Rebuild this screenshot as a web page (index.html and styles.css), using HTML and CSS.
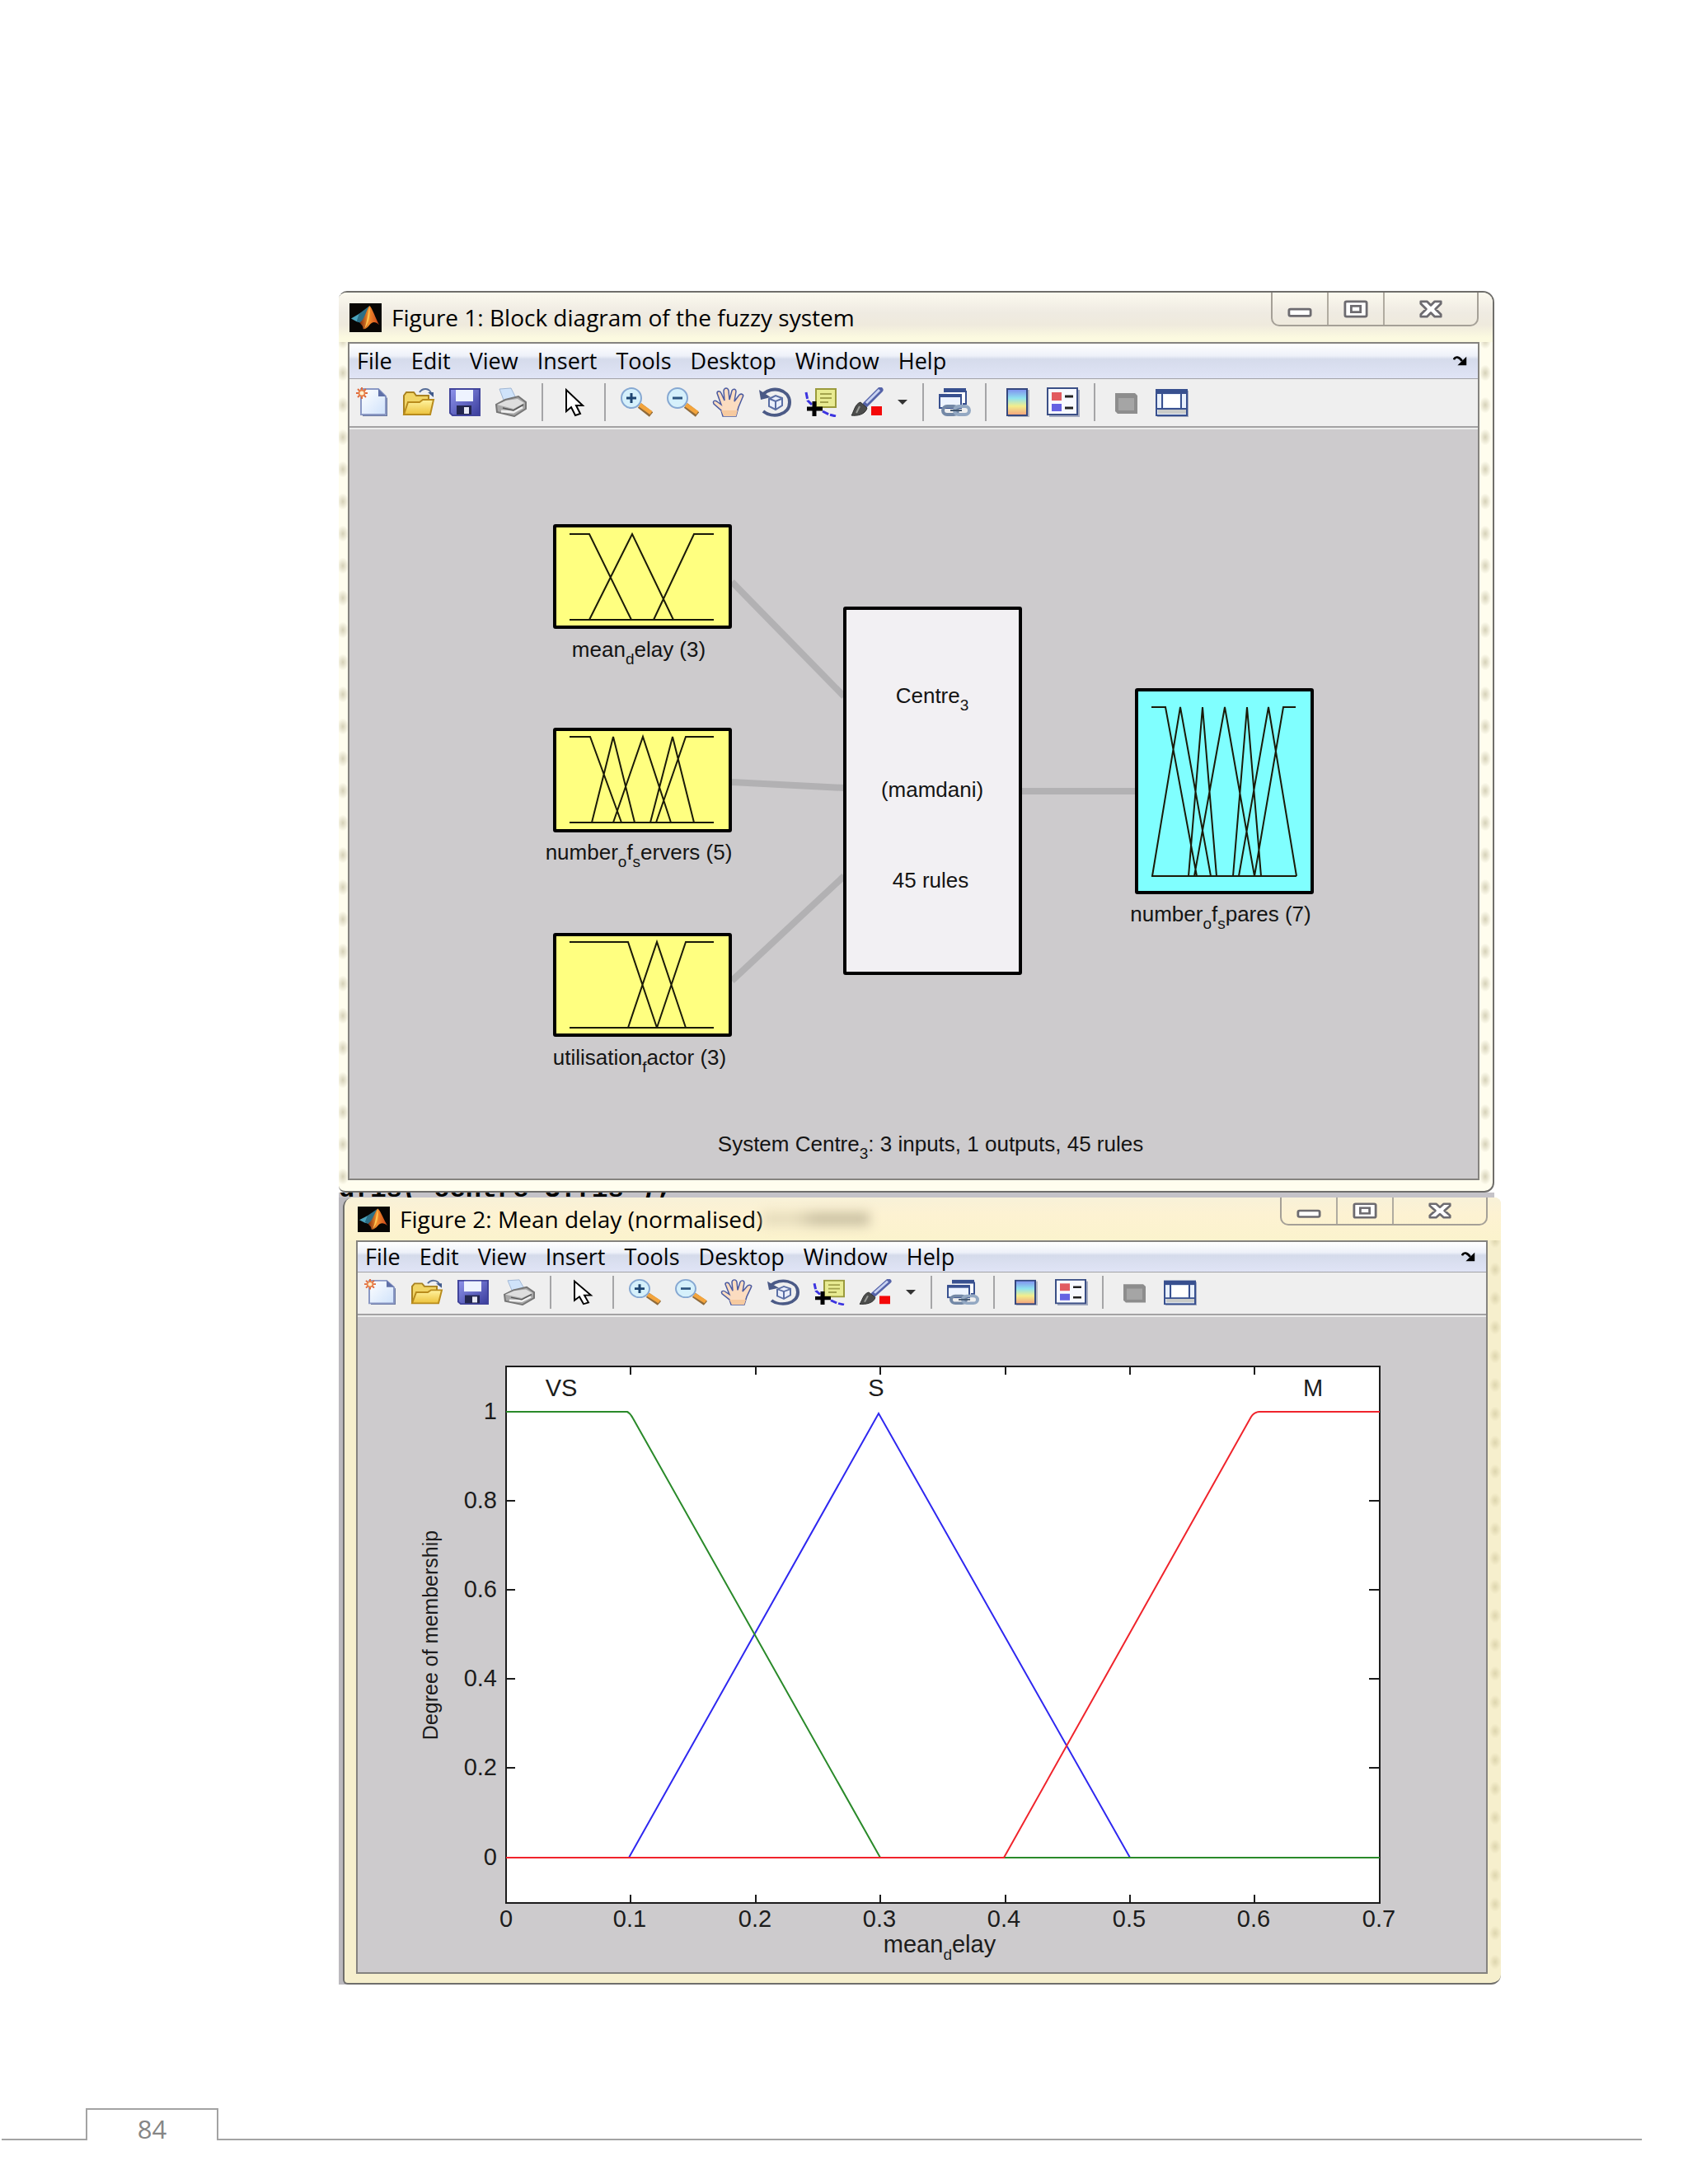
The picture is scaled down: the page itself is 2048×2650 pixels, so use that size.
FILE: index.html
```html
<!DOCTYPE html>
<html lang="en">
<head>
<meta charset="utf-8">
<title>Fuzzy system figures</title>
<link rel="stylesheet" href="styles.css">
</head>
<body>
<svg class="sprite" aria-hidden="true">
  <defs>
    <linearGradient id="g-page" x1="0" y1="0" x2="1" y2="1"><stop offset="0" stop-color="#fff"/><stop offset="1" stop-color="#cfe2fb"/></linearGradient>
    <linearGradient id="g-folder" x1="0" y1="0" x2="0" y2="1"><stop offset="0" stop-color="#fff3a0"/><stop offset="1" stop-color="#ecc23c"/></linearGradient>
    <linearGradient id="g-disk" x1="0" y1="0" x2="1" y2="1"><stop offset="0" stop-color="#8f94ec"/><stop offset="1" stop-color="#3a3d9c"/></linearGradient>
    <linearGradient id="g-map" x1="0" y1="0" x2="0" y2="1"><stop offset="0" stop-color="#7f8df0"/><stop offset=".35" stop-color="#8fe3ee"/><stop offset=".65" stop-color="#f3ee8c"/><stop offset="1" stop-color="#f3a07c"/></linearGradient>
    <linearGradient id="g-peak" x1="0" y1="0" x2="1" y2="0"><stop offset="0" stop-color="#7c2a10"/><stop offset=".45" stop-color="#f5902c"/><stop offset="1" stop-color="#c8401a"/></linearGradient>
  </defs>
  <symbol id="logo" viewBox="0 0 40 36" preserveAspectRatio="none">
    <rect width="40" height="36" fill="#080604"/>
    <path d="M2 19 L12 13 L18 10 L14 24 L9 23Z" fill="#4aa3bd"/>
    <path d="M12 13 L25 3 L19 19 L14 25 L9 22Z" fill="#2c6f86"/>
    <path d="M25 3 C28 5 33 20 37 27 C32 22 28 23 25 27 C22 31 19 33 17 32 C17 27 14 27 13 24 C19 20 21 8 25 3Z" fill="url(#g-peak)"/>
    <path d="M25 4 C26 12 25 24 19 31 C22 22 23 12 25 4Z" fill="#ffc552"/>
  </symbol>
  <symbol id="new" viewBox="0 0 40 36" preserveAspectRatio="none">
    <path d="M8 4 H28 L38 13 V35 H8Z" fill="#68779f"/>
    <path d="M6 2 H27 L36 11 V33 H6Z" fill="url(#g-page)" stroke="#8a98c4" stroke-width="2"/>
    <path d="M27 2 L36 11 H27Z" fill="#5f70a8"/>
    <path d="M7 0 V14 M0 7 H14 M2 2 L12 12 M12 2 L2 12" stroke="#e06a3c" stroke-width="2"/>
    <circle cx="7" cy="7" r="3.5" fill="#fff2cf" stroke="#e8844e" stroke-width="2"/>
  </symbol>
  <symbol id="open" viewBox="0 0 40 36" preserveAspectRatio="none">
    <path d="M21 6 C25 0 33 1 35 7" fill="none" stroke="#596f99" stroke-width="2"/><path d="M31 6 H38 V12Z" fill="#405a8c"/>
    <path d="M2 32 V10 L5 6 H14 L17 10 H32 V32Z" fill="#f1d566" stroke="#a98220" stroke-width="2"/>
    <path d="M2 33 L7 18 H21 L25 15 H38 L34 33Z" fill="url(#g-folder)" stroke="#b88b1c" stroke-width="2"/>
  </symbol>
  <symbol id="save" viewBox="0 0 40 36" preserveAspectRatio="none">
    <path d="M2 2 H38 V34 H5 L2 31Z" fill="url(#g-disk)" stroke="#41449b" stroke-width="2"/>
    <rect x="9" y="3" width="21" height="14" fill="#eef3ff"/><rect x="10" y="22" width="18" height="11" fill="#23264e"/>
    <rect x="19" y="24" width="6" height="8" fill="#e7e9f4"/>
  </symbol>
  <symbol id="print" viewBox="0 0 40 36" preserveAspectRatio="none">
    <path d="M6 2 L20 1 L27 15 L12 18Z" fill="#cfe3fa" stroke="#9fb6d4"/>
    <path d="M2 21 L13 15 L29 11 L38 18 V26 L24 35 L3 30Z" fill="#a8a8a8" stroke="#767676" stroke-width="2"/>
    <path d="M3 21 L14 16 L28 14 L36 19 L23 26Z" fill="#dedede"/>
    <path d="M8 29 L23 30 L34 24" fill="none" stroke="#efefef" stroke-width="3"/><path d="M10 25 L23 28 L35 21" fill="none" stroke="#555" stroke-width="1.5"/>
  </symbol>
  <symbol id="pointer" viewBox="0 0 40 36" preserveAspectRatio="none">
    <path d="M11 3 V29 L17 24 L22 34 L28 32 L23 22 H31Z" fill="#fff" stroke="#000" stroke-width="2"/>
  </symbol>
  <symbol id="zoomin" viewBox="0 0 40 36" preserveAspectRatio="none">
    <path d="M24 22 L38 33" stroke="#8f6a3a" stroke-width="7"/><path d="M24 21 L38 31" stroke="#f3a43c" stroke-width="5"/>
    <circle cx="14" cy="13" r="12" fill="#d5f0fb" stroke="#86a8d2" stroke-width="2"/><path d="M14 7 V19 M8 13 H20" stroke="#1d4470" stroke-width="3"/>
  </symbol>
  <symbol id="zoomout" viewBox="0 0 40 36" preserveAspectRatio="none">
    <path d="M24 22 L38 33" stroke="#8f6a3a" stroke-width="7"/><path d="M24 21 L38 31" stroke="#f3a43c" stroke-width="5"/>
    <circle cx="14" cy="13" r="12" fill="#d5f0fb" stroke="#86a8d2" stroke-width="2"/><path d="M8 13 H20" stroke="#2c5580" stroke-width="3"/>
  </symbol>
  <symbol id="pan" viewBox="0 0 40 36" preserveAspectRatio="none">
    <path d="M13 35 L11 28 L2 20 C0 16 4 15 7 18 L11 21 L6 7 C6 4 10 4 11 7 L15 16 L14 4 C15 0 19 0 20 4 L21 15 L24 4 C26 1 29 2 29 5 L27 17 L33 9 C36 7 39 9 37 12 L32 24 L29 35Z" fill="#fbdcc0" stroke="#4a5aa0" stroke-width="1.5"/>
    <path d="M14 35 L11 28 H31 L29 35Z" fill="#f6caa0"/>
  </symbol>
  <symbol id="rotate" viewBox="0 0 40 36" preserveAspectRatio="none">
    <path d="M6 8 C16 -2 38 2 38 18 C38 34 17 38 6 29" fill="none" stroke="#4b5a86" stroke-width="4"/>
    <path d="M1 3 L3 15 L15 12Z" fill="#4b5a86"/>
    <path d="M13 14 L21 10 L29 13 V22 L21 27 L13 23Z" fill="#e9eefb" stroke="#5a6ea4" stroke-width="2"/><path d="M14 14 L21 17 L28 14 M21 17 V26" fill="none" stroke="#5a6ea4" stroke-width="2"/>
  </symbol>
  <symbol id="datatip" viewBox="0 0 40 36" preserveAspectRatio="none">
    <path d="M2 6 L4 16 L9 21 M22 29 L30 33 L38 35" fill="none" stroke="#3c34e0" stroke-width="3" stroke-dasharray="8 2"/>
    <rect x="14" y="2" width="24" height="22" fill="#e8eb92" stroke="#9a9a3c" stroke-width="2"/>
    <path d="M19 8 H33 M19 13 H33 M19 18 H29" stroke="#a3a34c" stroke-width="2"/><path d="M12 17 V35 M3 26 H22" stroke="#000" stroke-width="5"/>
  </symbol>
  <symbol id="brush" viewBox="0 0 40 36" preserveAspectRatio="none">
    <path d="M36 3 L18 21" stroke="#5563a8" stroke-width="7" stroke-linecap="round"/><path d="M35 3 L19 19" stroke="#c9d3f2" stroke-width="3"/>
    <path d="M12 18 L20 25 C18 33 8 35 1 34 C4 30 5 20 12 18Z" fill="#4c4d4c" stroke="#2f302f"/><path d="M11 23 L7 31" stroke="#9a9c98" stroke-width="2"/>
    <rect x="25" y="23" width="13" height="11" fill="#f40808"/>
  </symbol>
  <symbol id="link" viewBox="0 0 40 36" preserveAspectRatio="none">
    <path d="M7 5 H34 V20 H30" fill="#fff" stroke="#38508f" stroke-width="2"/><rect x="7" y="1" width="27" height="5" fill="#38508f"/>
    <rect x="2" y="9" width="26" height="16" fill="#eef4ff" stroke="#38508f" stroke-width="2"/><rect x="2" y="8" width="26" height="4" fill="#38508f"/>
    <rect x="6" y="23" width="18" height="10" rx="5" fill="none" stroke="#7388a6" stroke-width="4"/><rect x="20" y="23" width="18" height="10" rx="5" fill="none" stroke="#93a8c2" stroke-width="4"/><path d="M15 28 H29" stroke="#42566f" stroke-width="2"/>
  </symbol>
  <symbol id="colorbar" viewBox="0 0 40 36" preserveAspectRatio="none">
    <rect x="9" y="3" width="26" height="33" fill="#b5b8c2"/><rect x="8" y="2" width="24" height="32" fill="url(#g-map)" stroke="#35487f" stroke-width="2"/>
  </symbol>
  <symbol id="legend" viewBox="0 0 40 36" preserveAspectRatio="none">
    <rect x="3" y="3" width="37" height="33" fill="#a4abc0"/><rect x="1" y="1" width="36" height="32" fill="#f7f9ff" stroke="#3b4f86" stroke-width="2"/>
    <rect x="6" y="6" width="12" height="10" fill="#e25b60"/><rect x="6" y="20" width="12" height="9" fill="#6562e2"/><path d="M22 11 H32 M22 25 H32" stroke="#222" stroke-width="3"/>
  </symbol>
  <symbol id="hide" viewBox="0 0 40 36" preserveAspectRatio="none">
    <path d="M7 7 H31 L34 10 V32 H10 L7 29Z" fill="#8d8d8d"/><rect x="11" y="13" width="19" height="15" fill="#a5a5a5"/>
  </symbol>
  <symbol id="dock" viewBox="0 0 40 36" preserveAspectRatio="none">
    <rect x="2" y="4" width="38" height="32" fill="#a4abc0"/><rect x="1" y="3" width="37" height="31" fill="#e8f0fc" stroke="#38508f" stroke-width="2"/>
    <rect x="0" y="2" width="39" height="6" fill="#38508f"/><path d="M8 8 V26 M31 8 V26 M1 26 H38" stroke="#38508f" stroke-width="2"/><rect x="10" y="9" width="19" height="15" fill="#fff"/><rect x="3" y="27" width="34" height="5" fill="#c9cbc9"/>
  </symbol>
  <symbol id="minimise" viewBox="0 0 32 24" preserveAspectRatio="none"><rect x="2" y="12" width="28" height="9" rx="2" fill="#fff" stroke="#6d6b70" stroke-width="3"/></symbol>
  <symbol id="maximise" viewBox="0 0 32 24" preserveAspectRatio="none"><rect x="2" y="2" width="28" height="20" rx="2" fill="#fff" stroke="#6d6b70" stroke-width="3"/><rect x="10" y="8" width="12" height="8" fill="#fff" stroke="#6d6b70" stroke-width="3"/></symbol>
  <symbol id="close" viewBox="0 0 32 24" preserveAspectRatio="none"><path d="M3 2 H11 L16 7 L21 2 H29 V5 L22 12 L29 19 V22 H21 L16 17 L11 22 H3 V19 L10 12 L3 5Z" fill="#fff" stroke="#6d6b70" stroke-width="3" stroke-linejoin="round"/></symbol>
  <symbol id="undock" viewBox="0 0 20 14" preserveAspectRatio="none"><path d="M1 5 C3 0 8 1 12 7" fill="none" stroke="#000" stroke-width="3"/><path d="M18 1 V13 H6Z" fill="#000"/></symbol>
</svg>

<main class="stack">
  <section class="window window-first" aria-labelledby="title-1">
    <header class="titlebar">
      <svg class="logo" aria-hidden="true"><use href="#logo"/></svg>
      <h1 class="title" id="title-1">Figure 1: Block diagram of the fuzzy system</h1>
      <div class="controls">
        <button class="control" aria-label="Minimise"><svg class="glyph"><use href="#minimise"/></svg></button>
        <button class="control" aria-label="Maximise"><svg class="glyph"><use href="#maximise"/></svg></button>
        <button class="control control-close" aria-label="Close"><svg class="glyph"><use href="#close"/></svg></button>
      </div>
    </header>
    <div class="client">
      <nav class="menubar" aria-label="Figure 1 menu">
        <button class="menu">File</button><button class="menu">Edit</button><button class="menu">View</button><button class="menu">Insert</button><button class="menu">Tools</button><button class="menu">Desktop</button><button class="menu">Window</button><button class="menu">Help</button>
        <button class="undock" aria-label="Dock figure"><svg class="undock-icon"><use href="#undock"/></svg></button>
      </nav>
      <div class="toolbar" role="toolbar" aria-label="Figure 1 tools">
        <button class="tool" aria-label="New figure"><svg class="icon"><use href="#new"/></svg></button>
        <button class="tool" aria-label="Open"><svg class="icon"><use href="#open"/></svg></button>
        <button class="tool" aria-label="Save"><svg class="icon"><use href="#save"/></svg></button>
        <button class="tool" aria-label="Print"><svg class="icon"><use href="#print"/></svg></button>
        <span class="divider"></span>
        <button class="tool" aria-label="Edit plot"><svg class="icon"><use href="#pointer"/></svg></button>
        <span class="divider"></span>
        <button class="tool" aria-label="Zoom in"><svg class="icon"><use href="#zoomin"/></svg></button>
        <button class="tool" aria-label="Zoom out"><svg class="icon"><use href="#zoomout"/></svg></button>
        <button class="tool" aria-label="Pan"><svg class="icon"><use href="#pan"/></svg></button>
        <button class="tool" aria-label="Rotate 3D"><svg class="icon"><use href="#rotate"/></svg></button>
        <button class="tool" aria-label="Data cursor"><svg class="icon"><use href="#datatip"/></svg></button>
        <button class="tool" aria-label="Brush"><svg class="icon"><use href="#brush"/></svg></button>
        <button class="tool-more" aria-label="Brush options"><span class="caret"></span></button>
        <span class="divider"></span>
        <button class="tool" aria-label="Link plot"><svg class="icon"><use href="#link"/></svg></button>
        <span class="divider"></span>
        <button class="tool" aria-label="Insert colorbar"><svg class="icon"><use href="#colorbar"/></svg></button>
        <button class="tool" aria-label="Insert legend"><svg class="icon"><use href="#legend"/></svg></button>
        <span class="divider"></span>
        <button class="tool" aria-label="Hide plot tools"><svg class="icon"><use href="#hide"/></svg></button>
        <button class="tool" aria-label="Show plot tools"><svg class="icon"><use href="#dock"/></svg></button>
      </div>
      <svg class="canvas" viewBox="424 521 1369 909" role="img" aria-label="Block diagram of the fuzzy system">
        <g class="wire">
          <path d="M888 706 L1024 845"/><path d="M888 949 L1024 956"/><path d="M888 1190 L1024 1063"/><path d="M1240 960 H1378"/>
        </g>
        <g class="block input">
          <rect x="673" y="638" width="213" height="123" rx="1"/><rect x="673" y="885" width="213" height="123" rx="1"/><rect x="673" y="1134" width="213" height="122" rx="1"/>
        </g>
        <rect class="block rules" x="1025" y="738" width="213" height="443" rx="1"/>
        <rect class="block output" x="1379" y="837" width="213" height="246" rx="1"/>
        <g class="membership">
          <path d="M691 648 H715 L766 752 M715 752 L767 648 L817 752 M793 752 L842 648 H866 M691 752 H866"/>
          <path d="M691 894 H716 L754 998 M718 998 L744 894 L770 998 M744 998 L780 894 L814 998 M789 998 L816 894 L842 998 M796 998 L832 894 H866 M691 998 H866"/>
          <path d="M691 1143 H762 L797 1247 M762 1247 L797 1143 L832 1247 M797 1247 L832 1143 H866 M691 1247 H866"/>
          <path d="M1397 858 H1414 L1452 1063 M1398 1063 L1432 858 L1469 1063 M1442 1063 L1459 858 L1476 1063 M1449 1063 L1486 858 L1522 1063 M1496 1063 L1513 858 L1530 1063 M1503 1063 L1539 858 L1573 1063 M1522 1063 L1557 858 H1572 M1397 1063 H1573"/>
        </g>
        <g class="label" text-anchor="middle">
          <text x="775" y="797">mean<tspan class="sub" dy="9">d</tspan><tspan dy="-9">elay (3)</tspan></text>
          <text x="775" y="1043">number<tspan class="sub" dy="9">o</tspan><tspan dy="-9">f</tspan><tspan class="sub" dy="9">s</tspan><tspan dy="-9">ervers (5)</tspan></text>
          <text x="776" y="1292">utilisation<tspan class="sub" dy="9">f</tspan><tspan dy="-9">actor (3)</tspan></text>
          <text x="1131" y="853">Centre<tspan class="sub" dy="9">3</tspan></text>
          <text x="1131" y="967">(mamdani)</text>
          <text x="1129" y="1077">45 rules</text>
          <text x="1481" y="1118">number<tspan class="sub" dy="9">o</tspan><tspan dy="-9">f</tspan><tspan class="sub" dy="9">s</tspan><tspan dy="-9">pares (7)</tspan></text>
          <text x="1129" y="1397">System Centre<tspan class="sub" dy="9">3</tspan><tspan dy="-9">: 3 inputs, 1 outputs, 45 rules</tspan></text>
        </g>
      </svg>
    </div>
  </section>

  <div class="desktop">
    <div class="code">dfis('centre 3.fis');</div>
    <section class="window window-second" aria-labelledby="title-2">
      <header class="titlebar">
        <svg class="logo" aria-hidden="true"><use href="#logo"/></svg>
        <h2 class="title" id="title-2">Figure 2: Mean delay (normalised)</h2>
        <span class="smudge"></span>
        <div class="controls">
          <button class="control" aria-label="Minimise"><svg class="glyph"><use href="#minimise"/></svg></button>
          <button class="control" aria-label="Maximise"><svg class="glyph"><use href="#maximise"/></svg></button>
          <button class="control control-close" aria-label="Close"><svg class="glyph"><use href="#close"/></svg></button>
        </div>
      </header>
      <div class="client">
        <nav class="menubar" aria-label="Figure 2 menu">
          <button class="menu">File</button><button class="menu">Edit</button><button class="menu">View</button><button class="menu">Insert</button><button class="menu">Tools</button><button class="menu">Desktop</button><button class="menu">Window</button><button class="menu">Help</button>
          <button class="undock" aria-label="Dock figure"><svg class="undock-icon"><use href="#undock"/></svg></button>
        </nav>
        <div class="toolbar" role="toolbar" aria-label="Figure 2 tools">
          <button class="tool" aria-label="New figure"><svg class="icon"><use href="#new"/></svg></button>
          <button class="tool" aria-label="Open"><svg class="icon"><use href="#open"/></svg></button>
          <button class="tool" aria-label="Save"><svg class="icon"><use href="#save"/></svg></button>
          <button class="tool" aria-label="Print"><svg class="icon"><use href="#print"/></svg></button>
          <span class="divider"></span>
          <button class="tool" aria-label="Edit plot"><svg class="icon"><use href="#pointer"/></svg></button>
          <span class="divider"></span>
          <button class="tool" aria-label="Zoom in"><svg class="icon"><use href="#zoomin"/></svg></button>
          <button class="tool" aria-label="Zoom out"><svg class="icon"><use href="#zoomout"/></svg></button>
          <button class="tool" aria-label="Pan"><svg class="icon"><use href="#pan"/></svg></button>
          <button class="tool" aria-label="Rotate 3D"><svg class="icon"><use href="#rotate"/></svg></button>
          <button class="tool" aria-label="Data cursor"><svg class="icon"><use href="#datatip"/></svg></button>
          <button class="tool" aria-label="Brush"><svg class="icon"><use href="#brush"/></svg></button>
          <button class="tool-more" aria-label="Brush options"><span class="caret"></span></button>
          <span class="divider"></span>
          <button class="tool" aria-label="Link plot"><svg class="icon"><use href="#link"/></svg></button>
          <span class="divider"></span>
          <button class="tool" aria-label="Insert colorbar"><svg class="icon"><use href="#colorbar"/></svg></button>
          <button class="tool" aria-label="Insert legend"><svg class="icon"><use href="#legend"/></svg></button>
          <span class="divider"></span>
          <button class="tool" aria-label="Hide plot tools"><svg class="icon"><use href="#hide"/></svg></button>
          <button class="tool" aria-label="Show plot tools"><svg class="icon"><use href="#dock"/></svg></button>
        </div>
        <svg class="canvas" viewBox="434 1598 1369 795" role="img" aria-label="Membership functions of mean delay">
          <rect class="axes" x="614" y="1658" width="1060" height="651"/>
          <path class="ticks" d="M765 1658 v10 M917 1658 v10 M1068 1658 v10 M1220 1658 v10 M1371 1658 v10 M1522 1658 v10 M765 2309 v-10 M917 2309 v-10 M1068 2309 v-10 M1220 2309 v-10 M1371 2309 v-10 M1522 2309 v-10 M614 1821 h11 M614 1929 h11 M614 2037 h11 M614 2145 h11 M1674 1821 h-13 M1674 1929 h-13 M1674 2037 h-13 M1674 2145 h-13"/>
          <path class="curve blue" d="M763 2254 L1066 1715 L1371 2254"/>
          <path class="curve green" d="M614 1713 H761 Q765 1715 768 1721 L1068 2254 H1674"/>
          <path class="curve red" d="M614 2254 H1218 L1518 1719 Q1522 1713 1528 1713 H1674"/>
          <g class="number" text-anchor="end">
            <text x="603" y="1722">1</text><text x="603" y="1830">0.8</text><text x="603" y="1938">0.6</text><text x="603" y="2046">0.4</text><text x="603" y="2154">0.2</text><text x="603" y="2263">0</text>
          </g>
          <g class="number" text-anchor="middle">
            <text x="614" y="2338">0</text><text x="764" y="2338">0.1</text><text x="916" y="2338">0.2</text><text x="1067" y="2338">0.3</text><text x="1218" y="2338">0.4</text><text x="1370" y="2338">0.5</text><text x="1521" y="2338">0.6</text><text x="1673" y="2338">0.7</text>
            <text x="681" y="1694">VS</text><text x="1063" y="1694">S</text><text x="1593" y="1694">M</text>
            <text x="1140" y="2369">mean<tspan class="sub" dy="9">d</tspan><tspan dy="-9">elay</tspan></text>
          </g>
          <text class="axis-title" text-anchor="middle" transform="translate(531 1984) rotate(-90)">Degree of membership</text>
        </svg>
      </div>
    </section>
  </div>
</main>

<footer class="footer">
  <span class="rule rule-lead"></span>
  <span class="page-number">84</span>
  <span class="rule rule-rest"></span>
</footer>
</body>
</html>
```
FILE: styles.css
```css
* { box-sizing: border-box; }

body {
  margin: 0;
  min-height: 100vh;
  display: flex;
  flex-direction: column;
  background: #fff;
  color: #000;
  font-family: "Open Sans", "Noto Sans", sans-serif;
}

button {
  margin: 0;
  padding: 0;
  border: 0;
  background: none;
  color: inherit;
  font: inherit;
}

.sprite { position: absolute; width: 0; height: 0; }

.stack { padding: 353px 227px 60px 411px; }

/* Window frames */
.window {
  border: 2px solid #6f6e6b;
  background-repeat: repeat-y;
  overflow: hidden;
}

.window-first {
  margin-right: 8px;
  padding: 0 16px 13px 11px;
  border-left: 0;
  border-radius: 10px 14px 12px 8px;
  background-color: #fffdee;
  background-image: radial-gradient(7px 10px, #d6d1b8, #fffdee00), radial-gradient(7px 10px, #d6d1b8, #fffdee00);
  background-size: 14px 39px;
  background-position: right 2px top 0, left -2px top 0;
}

.window-second {
  padding: 0 16px 11px 14px;
  border-top: 0;
  border-right: 0;
  border-radius: 12px 8px 12px 6px;
  background-color: #f6efcd;
  background-image: radial-gradient(7px 9px, #ddd5ae, #f6efcd00);
  background-size: 14px 35px;
  background-position: right 0 top 0;
}

.desktop {
  padding-left: 5px;
  background: linear-gradient(90deg, #bbb9be 0, #bbb9be 20px, #fff 20px);
}

.code {
  height: 6px;
  margin: 0 8px 0 -5px;
  display: flex;
  align-items: flex-end;
  overflow: hidden;
  background: #c5c3c8;
  font: bold 32px/18px "Liberation Mono", monospace;
  white-space: pre;
}

/* Title bar */
.titlebar {
  display: flex;
  align-items: center;
  height: 60px;
  margin: 0 -16px 0 -11px;
  padding: 0 17px 0 13px;
  background: linear-gradient(#fbf9ee 0, #efebe2 40%, #efeadd 65%, #fcfae0 92%);
}

.window-second .titlebar {
  height: 52px;
  margin-left: -14px;
  padding: 0 16px;
  background: linear-gradient(#f8f1d8, #fdf2d2 40%, #fbf3cd);
}

.logo { width: 39px; height: 35px; margin-right: 12px; }
.window-second .logo { height: 31px; }

.title { margin: 0; font-size: 28px; line-height: 32px; font-weight: 400; white-space: nowrap; }

.smudge {
  width: 130px;
  height: 16px;
  background: linear-gradient(90deg, #e5dcbc, #e5dcbc 30%, #c9c0a2 50%, #c9c0a2);
  filter: blur(7px);
}

.controls {
  display: flex;
  align-self: flex-start;
  height: 41px;
  margin-left: auto;
  border: 2px solid #a5a097;
  border-top: 0;
  border-radius: 0 0 10px 10px;
}

.window-second .controls { height: 34px; }

.control { display: grid; place-items: center; width: 68px; border-right: 2px solid #b0aba0; }
.control-close { width: 112px; border-right: 0; }
.glyph { width: 30px; height: 22px; }
.window-second .glyph { height: 20px; }

/* Client area */
.client { border: 2px solid #85837f; background: #cdcbcd; }

.menubar {
  display: flex;
  align-items: center;
  gap: 23px;
  height: 43px;
  padding: 0 12px 0 9px;
  border-bottom: 1px solid #a2a2a6;
  background: linear-gradient(#fff 0, #eef1f9 35%, #d5dbeb 45%, #e0e4f6 100%);
  font-size: 27px;
  line-height: 32px;
}

.window-second .menubar { height: 37px; }
.undock { display: grid; margin-left: auto; }
.undock-icon { width: 18px; height: 12px; }

.toolbar {
  display: flex;
  align-items: center;
  height: 61px;
  padding-bottom: 6px;
  background: linear-gradient(#efefef calc(100% - 4px), #a3a2a3 calc(100% - 4px), #a3a2a3 calc(100% - 2px), #ececec calc(100% - 2px));
}

.window-second .toolbar { height: 54px; }
.tool { display: grid; place-items: center; width: 56px; }
.tool-more { display: grid; place-items: center; width: 30px; }
.icon { width: 40px; height: 36px; }
.window-second .icon { height: 32px; }
.caret { border: 6px solid transparent; border-top-color: #333; border-bottom: 0; }
.divider { width: 2px; height: 46px; margin: 0 9px; background: #a5a5a7; }
.window-second .divider { height: 40px; }

/* Drawings */
.canvas {
  display: block;
  width: 100%;
  height: auto;
  font-family: "Liberation Sans", Arial, sans-serif;
}

.wire { fill: none; stroke: #b2b1b3; stroke-width: 8px; }
.block { stroke: #000; stroke-width: 4px; }
.input { fill: #ffff80; }
.rules { fill: #f2f0f3; }
.output { fill: #80ffff; }
.membership { fill: none; stroke: #1a1a08; stroke-width: 2px; }
.label { font-size: 26px; fill: #141414; }
.number { font-size: 29px; fill: #1c1c1c; }
.axis-title { font-size: 25px; fill: #1c1c1c; }
.sub { font-size: 19px; }
.axes { fill: #fff; stroke: #1c1c1c; stroke-width: 2px; }
.ticks { fill: none; stroke: #1c1c1c; stroke-width: 2px; }
.curve { fill: none; stroke-width: 2px; }
.blue { stroke: #2f28f0; }
.green { stroke: #2a8a2a; }
.red { stroke: #f0242c; }

/* Page footer */
.footer {
  display: flex;
  align-items: flex-end;
  margin-top: auto;
  padding: 0 56px 53px 2px;
}

.rule { height: 2px; background: #a3a3a3; }
.rule-lead { width: 102px; }
.rule-rest { flex: 1; }

.page-number {
  width: 161px;
  height: 39px;
  border: 2px solid #a3a3a3;
  border-bottom: 0;
  color: #858585;
  font: 31px/46px "Open Sans", sans-serif;
  text-align: center;
}
```
